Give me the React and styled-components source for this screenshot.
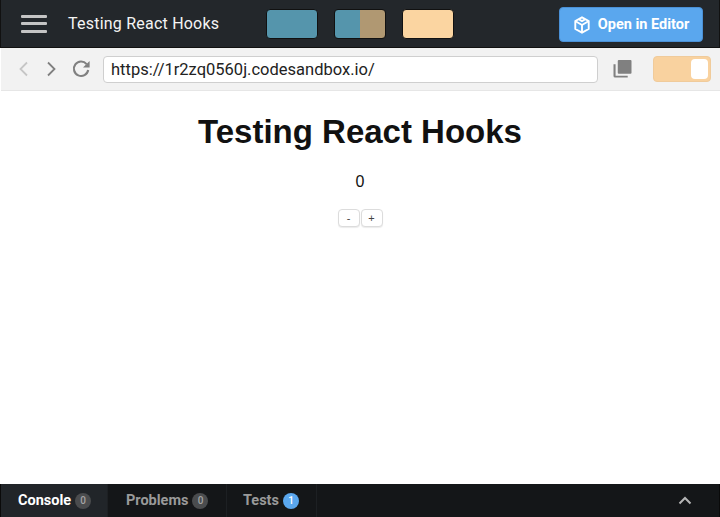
import React, { useState } from "react";
import styled, { createGlobalStyle } from "styled-components";

const Global = createGlobalStyle`
  html, body { margin: 0; padding: 0; background: #fff; }
  body { font-family: Roboto, "Liberation Sans", sans-serif; }
  * { box-sizing: border-box; }
`;

const Page = styled.div`
  width: 720px;
  height: 517px;
  display: flex;
  flex-direction: column;
  overflow: hidden;
`;

const TopBar = styled.header`
  height: 48px;
  flex: none;
  display: flex;
  align-items: center;
  background: #23272b;
  border-left: 1px solid #111;
  border-right: 1px solid #111;
  border-bottom: 1px solid #111;
  padding: 0 16px 0 20px;
`;

const Burger = styled.div`
  width: 26px;
  height: 18px;
  display: flex;
  flex-direction: column;
  justify-content: space-between;
  span {
    display: block;
    height: 3px;
    border-radius: 1px;
    background: #c4c4c4;
  }
`;

const AppTitle = styled.div`
  margin-left: 21px;
  width: 198px;
  font-size: 16px;
  color: #f4f4f4;
  letter-spacing: 0.22px;
`;

const Swatches = styled.div`
  display: flex;
  gap: 16px;
  align-self: flex-start;
  margin-top: 9px;
`;

const Swatch = styled.div`
  width: 52px;
  height: 30px;
  border-radius: 4px;
  border: 1px solid #111;
  background: ${(p) => p.$bg};
`;

const OpenButton = styled.button`
  margin: 7px 0 0 auto;
  align-self: flex-start;
  width: 144px;
  height: 35px;
  display: flex;
  align-items: center;
  justify-content: center;
  gap: 7px;
  background: #5aa7ee;
  border: 1px solid #4a90d6;
  border-radius: 4px;
  color: #fff;
  font-family: inherit;
  font-size: 14.5px;
  font-weight: 700;
  padding: 0;
`;

const AddressBar = styled.div`
  height: 43px;
  flex: none;
  display: flex;
  align-items: center;
  background: #f2f2f2;
  border-bottom: 1px solid #e6e6e6;
  margin-left: 1px;
  padding: 0 9px 0 18px;
`;

const NavIcon = styled.svg`
  flex: none;
  display: block;
  margin-right: ${(p) => p.$gap}px;
`;

const UrlInput = styled.div`
  width: 495px;
  height: 27px;
  display: flex;
  align-items: center;
  padding-left: 7px;
  background: #fff;
  border: 1px solid #cfcfcf;
  border-radius: 4px;
  font-size: 16.5px;
  color: #222;
`;

const CopyIcon = styled.svg`
  flex: none;
  margin-left: 15px;
`;

const Toggle = styled.div`
  margin-left: auto;
  width: 58px;
  height: 26px;
  display: flex;
  align-items: center;
  justify-content: flex-end;
  padding-right: 2px;
  background: #f9d29f;
  border: 1px solid #f0cb9b;
  border-radius: 4px;
`;

const Knob = styled.div`
  width: 17px;
  height: 20px;
  border-radius: 4px;
  background: #fff;
`;

const Preview = styled.main`
  flex: 1;
  display: flex;
  flex-direction: column;
  align-items: center;
  background: #fff;
  font-family: "Liberation Sans", Arial, sans-serif;
`;

const Heading = styled.h1`
  margin: 22px 0 0;
  font-size: 33px;
  line-height: 38px;
  font-weight: 700;
  color: #111;
`;

const Count = styled.p`
  margin: 22px 0 0;
  font-size: 16px;
  line-height: 18px;
  color: #111;
`;

const Buttons = styled.div`
  display: flex;
  gap: 1px;
  margin-top: 18px;
`;

const StepButton = styled.button`
  width: 22px;
  height: 18px;
  padding: 0;
  background: #fff;
  border: 1px solid #dcdcdc;
  border-radius: 4px;
  box-shadow: 0 1px 1px rgba(0, 0, 0, 0.08);
  font-family: inherit;
  font-size: 11px;
  color: #444;
`;

const BottomBar = styled.footer`
  height: 33px;
  flex: none;
  display: flex;
  align-items: stretch;
  background: #141618;
  border-left: 1px solid #0a0a0a;
  border-right: 1px solid #0a0a0a;
`;

const Tab = styled.div`
  width: ${(p) => p.$w}px;
  display: flex;
  align-items: center;
  gap: 4px;
  padding-left: ${(p) => p.$pad}px;
  background: ${(p) => (p.$active ? "#212529" : "transparent")};
  border-right: 1px solid #1d2023;
  color: ${(p) => (p.$active ? "#fff" : "#9a9a9a")};
  font-size: 14.5px;
  font-weight: 700;
`;

const Badge = styled.span`
  width: 16px;
  height: 16px;
  border-radius: 50%;
  display: flex;
  align-items: center;
  justify-content: center;
  background: ${(p) => (p.$blue ? "#5aa7ee" : "#4a4c4e")};
  color: ${(p) => (p.$blue ? "#fff" : "#a5a5a5")};
  font-size: 10px;
  font-weight: 500;
`;

const Chevron = styled.svg`
  margin: auto 27px auto auto;
`;

export default function App() {
  const [count, setCount] = useState(0);
  return (
    <Page>
      <Global />
      <TopBar>
        <Burger>
          <span />
          <span />
          <span />
        </Burger>
        <AppTitle>Testing React Hooks</AppTitle>
        <Swatches>
          <Swatch $bg="#5595ac" />
          <Swatch $bg="linear-gradient(90deg, #5595ac 50%, #b09872 50%)" />
          <Swatch $bg="#fbd5a1" />
        </Swatches>
        <OpenButton>
          <svg width="18" height="18" viewBox="0 0 18 18" fill="none" stroke="#fff" strokeWidth="1.9" strokeLinejoin="round">
            <path d="M9 1.3 15.7 5v8L9 16.7 2.3 13V5z" />
            <path d="M2.6 5.2 9 9l6.4-3.8M9 9v7.4M5.8 3.2 9 5.1l3.2-1.9" />
          </svg>
          Open in Editor
        </OpenButton>
      </TopBar>
      <AddressBar>
        <NavIcon $gap={19} width="9" height="16" viewBox="0 0 9 16" fill="none" stroke="#c6c6c6" strokeWidth="1.8">
          <path d="M8 1.5 1.5 8 8 14.5" />
        </NavIcon>
        <NavIcon $gap={16} width="9" height="16" viewBox="0 0 9 16" fill="none" stroke="#808080" strokeWidth="1.8">
          <path d="M1 1.5 7.5 8 1 14.5" />
        </NavIcon>
        <NavIcon $gap={13} width="18" height="18" viewBox="0 0 18 18" fill="none">
          <path d="M14.6 4.1A7.2 7.2 0 1 0 16.2 10" stroke="#808080" strokeWidth="2.1" />
          <path d="M17.6 1v6.6H11z" fill="#808080" />
        </NavIcon>
        <UrlInput>https://1r2zq0560j.codesandbox.io/</UrlInput>
        <CopyIcon width="19" height="18" viewBox="0 0 20 19" fill="#808080">
          <rect x="5" y="0" width="14.5" height="14.5" rx="1" />
          <path d="M0.5 4.5h2.2v12h12.8v2H2.2a1.7 1.7 0 0 1-1.7-1.7z" />
        </CopyIcon>
        <Toggle>
          <Knob />
        </Toggle>
      </AddressBar>
      <Preview>
        <Heading>Testing React Hooks</Heading>
        <Count>{count}</Count>
        <Buttons>
          <StepButton onClick={() => setCount(count - 1)}>-</StepButton>
          <StepButton onClick={() => setCount(count + 1)}>+</StepButton>
        </Buttons>
      </Preview>
      <BottomBar>
        <Tab $active $w={107} $pad={17}>
          Console <Badge>0</Badge>
        </Tab>
        <Tab $w={119} $pad={18}>
          Problems <Badge>0</Badge>
        </Tab>
        <Tab $w={90} $pad={16}>
          Tests <Badge $blue>1</Badge>
        </Tab>
        <Chevron width="14" height="9" viewBox="0 0 14 9" fill="none" stroke="#b5b5b5" strokeWidth="2">
          <path d="M1.5 7.5 7 2l5.5 5.5" />
        </Chevron>
      </BottomBar>
    </Page>
  );
}
